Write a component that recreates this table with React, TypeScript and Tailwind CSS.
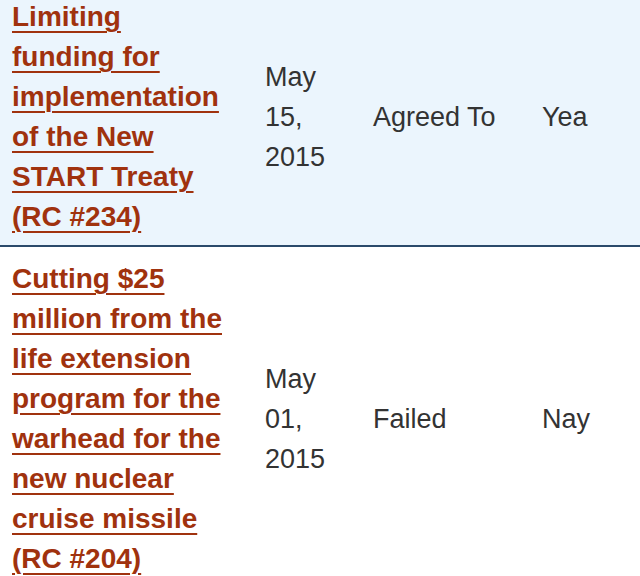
import React from 'react';

type Vote = {
  title: string;
  date: string;
  result: string;
  vote: string;
};

const votes: Vote[] = [
  {
    title: 'Limiting funding for implementation of the New START Treaty (RC #234)',
    date: 'May 15, 2015',
    result: 'Agreed To',
    vote: 'Yea',
  },
  {
    title:
      'Cutting $25 million from the life extension program for the warhead for the new nuclear cruise missile (RC #204)',
    date: 'May 01, 2015',
    result: 'Failed',
    vote: 'Nay',
  },
];

const App: React.FC = () => {
  return (
    <div className="w-[640px] h-[576px] overflow-hidden bg-white font-['Liberation_Sans',Arial,sans-serif] text-[27px] leading-[40px] text-[#333]">
      <div className="-mt-[15px]">
        {votes.map((v, idx) => (
          <div
            key={idx}
            className={`grid grid-cols-[253px_108px_169px_1fr] items-center ${
              idx === 0 ? 'bg-[#ebf5fd] border-b-2 border-[#2b4a6b] pt-3 pb-2' : 'bg-white pt-3 pb-3'
            }`}
          >
            <div className="pl-3 pr-[27px]">
              <a href="#" className="font-bold text-[28px] text-[#a0320e] underline decoration-2 underline-offset-[5px]">
                {v.title}
              </a>
            </div>
            <div className="px-3">{v.date}</div>
            <div className="px-3">{v.result}</div>
            <div className="px-3">{v.vote}</div>
          </div>
        ))}
      </div>
    </div>
  );
};

export default App;
